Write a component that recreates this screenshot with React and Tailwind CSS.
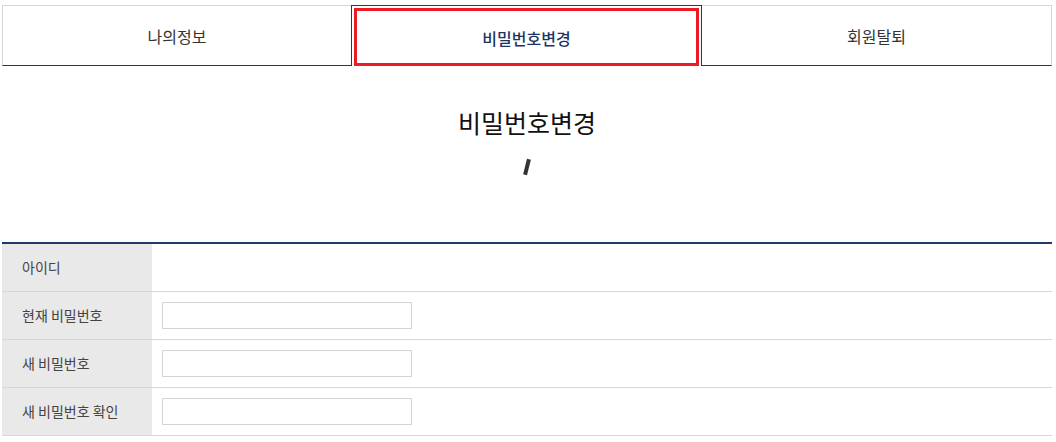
import React from 'react';

const rows = [
  { label: '아이디', input: false },
  { label: '현재 비밀번호', input: true },
  { label: '새 비밀번호', input: true },
  { label: '새 비밀번호 확인', input: true },
];

const PasswordChangePage = () => {
  return (
    <div className="min-h-[442px] w-full bg-white font-['Noto_Sans_CJK_KR','Noto_Sans',sans-serif]">
      <div className="ml-[2px] w-[1050px] pt-[5px]">
        {/* 탭 */}
        <div className="flex h-[61px]">
          <button className="flex w-[349px] items-center justify-center border-t border-l border-b border-t-[#d6d6d6] border-l-[#d6d6d6] border-b-[#1d3a6b] text-[16px] text-[#333]">
            나의정보
          </button>
          <div className="flex w-[351px] border-t border-l border-r border-[#1d3a6b] pt-[2px] pl-[2px] pr-[2px]">
            <button className="flex flex-1 items-center justify-center border-[3px] border-[#ec1c24] pt-[1px] text-[16px] font-medium text-[#1d3461]">
              비밀번호변경
            </button>
          </div>
          <button className="flex w-[350px] items-center justify-center border-t border-r border-b border-t-[#d6d6d6] border-r-[#d6d6d6] border-b-[#1d3a6b] text-[16px] text-[#333]">
            회원탈퇴
          </button>
        </div>

        {/* 타이틀 */}
        <div className="flex flex-col items-center pt-[40px]">
          <h2 className="text-[25px] leading-[33px] font-normal text-[#111]">비밀번호변경</h2>
          <span className="mt-[20px] block h-[16px] w-[4px] rotate-[14deg] bg-[#333]" />
        </div>

        {/* 폼 */}
        <div className="mt-[67px] border-t-2 border-[#1d3a6b]">
          {rows.map((row) => (
            <div key={row.label} className="flex h-[48px] border-b border-[#d6d6d6]">
              <div className="flex w-[150px] items-center bg-[#e9e9e9] pl-[20px] text-[14px] text-[#444]">
                {row.label}
              </div>
              <div className="flex flex-1 items-center pl-[10px]">
                {row.input && (
                  <input
                    type="password"
                    className="h-[27px] w-[250px] border border-[#d4d4d4] bg-white px-2 text-[13px] outline-none"
                  />
                )}
              </div>
            </div>
          ))}
        </div>
      </div>
    </div>
  );
};

export default PasswordChangePage;
